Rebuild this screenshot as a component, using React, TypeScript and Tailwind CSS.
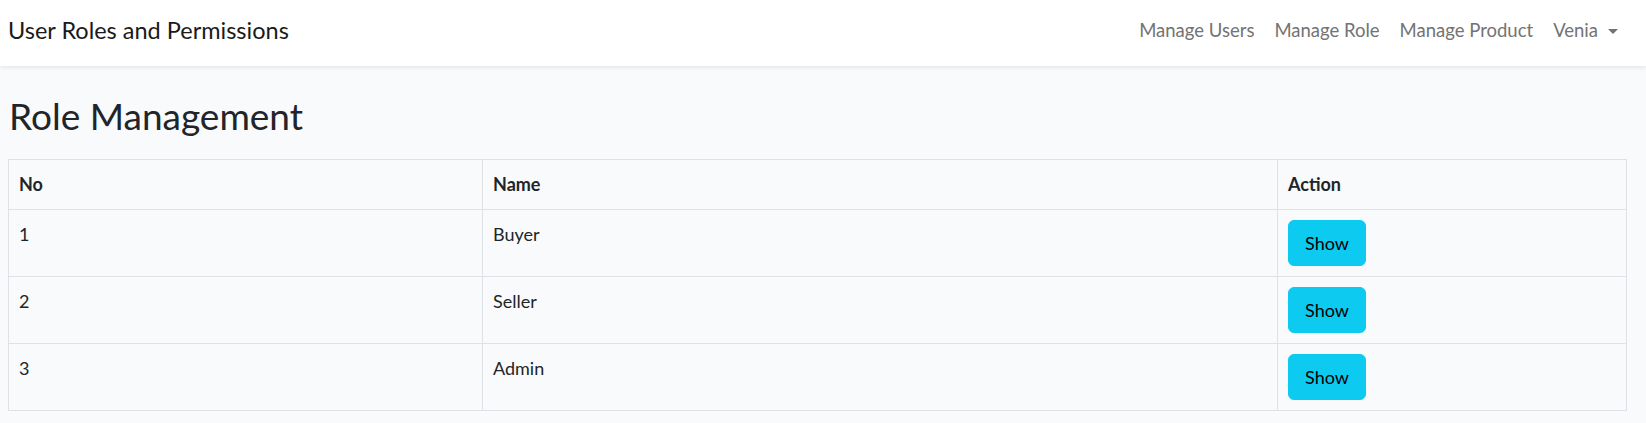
import React from 'react';

const roles = [
    { no: 1, name: 'Buyer' },
    { no: 2, name: 'Seller' },
    { no: 3, name: 'Admin' },
];

function Navbar() {
    return (
        <nav className="h-[66px] bg-white shadow-[0_2px_4px_rgba(0,0,0,0.075)] flex items-center justify-between pl-2 pr-[18px] pb-[4px] relative z-10">
            <a className="text-[23.5px] text-[#1a1a1a]">User Roles and Permissions</a>
            <ul className="flex items-center text-[18.5px] text-[#737373]">
                <li className="px-[10px]">Manage Users</li>
                <li className="px-[10px]">Manage Role</li>
                <li className="px-[10px]">Manage Product</li>
                <li className="px-[10px] flex items-center">
                    Venia
                    <span className="ml-[10px] w-0 h-0 border-l-[5px] border-r-[5px] border-t-[5px] border-l-transparent border-r-transparent border-t-[#737373]" />
                </li>
            </ul>
        </nav>
    );
}

export default function App() {
    return (
        <div className="min-h-[423px] bg-[#f8fafc] text-[#212529] text-[18px] leading-[1.6]" style={{ fontFamily: 'Lato, "Noto Sans", sans-serif' }}>
            <Navbar />
            <main className="pt-[28px] pl-2 pr-[19px]">
                <h2 className="text-[37px] leading-[1.2] font-normal mb-[21px] pl-[1px]">Role Management</h2>
                <table className="w-full table-fixed border border-[#dee2e6]">
                    <thead>
                        <tr>
                            <th className="w-[474px] border border-[#dee2e6] p-[10px] text-left font-bold">No</th>
                            <th className="w-[795px] border border-[#dee2e6] p-[10px] text-left font-bold">Name</th>
                            <th className="border border-[#dee2e6] p-[10px] text-left font-bold">Action</th>
                        </tr>
                    </thead>
                    <tbody>
                        {roles.map((r) => (
                            <tr key={r.no}>
                                <td className="border border-[#dee2e6] p-[10px] align-top">{r.no}</td>
                                <td className="border border-[#dee2e6] p-[10px] align-top">{r.name}</td>
                                <td className="border border-[#dee2e6] p-[10px] align-top">
                                    <button className="h-[46px] w-[78px] rounded-[6px] bg-[#0dcaf0] border border-[#0dcaf0] text-black">Show</button>
                                </td>
                            </tr>
                        ))}
                    </tbody>
                </table>
            </main>
        </div>
    );
}
